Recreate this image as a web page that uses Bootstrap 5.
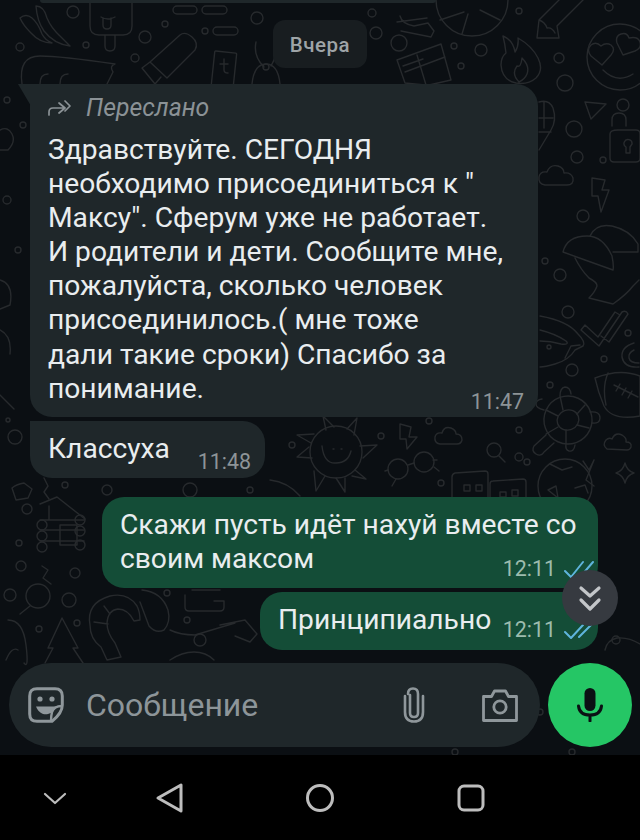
<!DOCTYPE html>
<html lang="ru">
  <head>
    <meta charset="UTF-8" />
    <title>Чат</title>
    <link href="https://cdn.jsdelivr.net/npm/bootstrap@5.3.3/dist/css/bootstrap.min.css" rel="stylesheet" />
    <style>
      html, body { height: 840px; overflow: hidden; }
      body { font-family: Roboto, "Liberation Sans", sans-serif; background: #000; color: #e9edef; }
      .chat-screen { height: 755px; background: #0b0f13; position: relative; overflow: hidden; }
      .doodles { position: absolute; left: 0; top: 0; width: 640px; height: 755px; fill: none; stroke: #272a2d; stroke-width: 1.4; stroke-linecap: round; stroke-linejoin: round; }
      .chat-flow { position: relative; height: 100%; }
      .top-sliver { height: 3px; width: 396px; margin-left: 40px; background: #1f272a; border-radius: 0 0 6px 6px; }
      .date-chip { width: 94px; height: 48px; margin: 17px auto 16px; padding-top: 3px; background: #181d20; border-radius: 12px; color: #9ea4a7; font-size: 20.5px; font-weight: 500; letter-spacing: .5px; }
      .bubble { background: #1f272a; font-size: 28.2px; line-height: 34.1px; position: relative; }
      .bubble-in { margin-left: 30px; border-radius: 0 22px 22px 22px; }
      .bubble-in.tailed::before { content: ""; position: absolute; left: -12px; top: 0; width: 13px; height: 22px; background: #1f272a; clip-path: polygon(0 0, 100% 0, 100% 100%); }
      .bubble-out { background: #144d37; margin-left: auto; margin-right: 42px; border-radius: 22px; }
      .bubble-long { width: 508px; height: 333px; padding: 12px 14px 0 18px; margin-bottom: 4px; }
      .bubble-short { width: 235px; height: 57px; padding: 11px 14px 0 18px; margin-bottom: 19px; }
      .bubble-sent { width: 496px; height: 91px; padding: 11px 3px 0 18px; margin-bottom: 4px; }
      .bubble-tiny { width: 338px; height: 58px; padding: 11px 3px 0 18px; }
      .forward-line { color: #8b9296; font-size: 24.8px; font-style: italic; line-height: 24px; margin-bottom: 13px; gap: 15px; }
      .msg-time { color: #8d9497; font-size: 21.4px; line-height: 24px; white-space: nowrap; }
      .bubble-out .msg-time { color: #9dbcae; }
      .time-end { margin-top: -16px; }
      .time-sent { gap: 8px; }
      .time-up { margin-top: -19px; }
      .scroll-down { position: absolute; left: 562px; top: 570px; width: 56px; height: 56px; border-radius: 50%; background: #363a40; }
      .composer-row { position: absolute; left: 9px; top: 663px; width: 623px; gap: 8px; }
      .composer { width: 531px; height: 84px; background: #1f272a; border-radius: 42px; padding: 0 22px 0 19px; color: #8d9599; font-size: 32px; }
      .composer-label { margin-left: 22px; }
      .clip-icon { margin-right: 56px; }
      .mic-btn { width: 84px; height: 84px; background: #25c665; border-radius: 50%; }
      .sys-nav { height: 85px; background: #000; padding-left: 41px; }
      .nav-back { margin-left: 86px; }
      .nav-home { margin-left: 120px; }
      .nav-recent { margin-left: 122px; }
    </style>
  </head>
  <body>
    <div class="chat-screen">
      <svg class="doodles" viewBox="0 0 640 755" aria-hidden="true">
        <!-- мелкие кружки -->
        <circle cx="73" cy="12" r="6"/><circle cx="165" cy="24" r="3"/><circle cx="145" cy="37" r="6"/><circle cx="20" cy="47" r="4"/>
        <circle cx="86" cy="45" r="3"/><circle cx="135" cy="58" r="4"/><circle cx="257" cy="18" r="6"/><circle cx="205" cy="31" r="3"/>
        <circle cx="372" cy="13" r="4"/><circle cx="376" cy="33" r="6"/><circle cx="399" cy="43" r="8"/><circle cx="454" cy="46" r="3"/>
        <circle cx="481" cy="50" r="6"/><circle cx="461" cy="66" r="3"/><circle cx="519" cy="11" r="3"/><circle cx="609" cy="7" r="4"/>
        <circle cx="559" cy="58" r="5"/><circle cx="565" cy="83" r="8"/><circle cx="623" cy="105" r="6"/><circle cx="574" cy="129" r="8"/>
        <circle cx="577" cy="157" r="6"/><circle cx="603" cy="160" r="3"/><circle cx="583" cy="216" r="6"/><circle cx="545" cy="261" r="3"/>
        <circle cx="560" cy="275" r="6"/><circle cx="568" cy="312" r="6"/><circle cx="628" cy="333" r="3"/><circle cx="604" cy="359" r="3"/>
        <circle cx="572" cy="370" r="6"/><circle cx="550" cy="385" r="3"/><circle cx="519" cy="430" r="3"/><circle cx="527" cy="462" r="3"/>
        <circle cx="292" cy="445" r="3"/><circle cx="381" cy="436" r="3"/><circle cx="519" cy="457" r="4"/><circle cx="441" cy="483" r="3"/>
        <circle cx="429" cy="421" r="3"/><circle cx="27" cy="509" r="5"/><circle cx="107" cy="490" r="5"/><circle cx="65" cy="485" r="3"/>
        <circle cx="19" cy="543" r="3"/><circle cx="21" cy="566" r="5"/><circle cx="75" cy="573" r="5"/><circle cx="10" cy="595" r="6"/>
        <circle cx="69" cy="600" r="7"/><circle cx="39" cy="629" r="3"/><circle cx="77" cy="623" r="3"/><circle cx="7" cy="100" r="3"/>
        <circle cx="23" cy="125" r="3"/><circle cx="15" cy="437" r="7"/><circle cx="167" cy="593" r="3"/>
        <circle cx="200" cy="640" r="6"/><circle cx="187" cy="620" r="3"/><circle cx="616" cy="640" r="4"/><circle cx="250" cy="490" r="3"/>
        <circle cx="190" cy="490" r="7"/><circle cx="455" cy="752" r="3"/><circle cx="572" cy="752" r="3"/><circle cx="540" cy="712" r="3"/>
        <!-- эскимо -->
        <path d="M90 -8v34q0 9 9 9h24q9 0 9-9v-34M105 35v11q0 5 5 5t5-5v-11"/>
        <path d="M101 17q7 4 14 0M103 18v7q0 4 4 4t4-4v-7"/>
        <!-- перец -->
        <path d="M20 18q6-5 12 0 6 5 10 16 3 6 10 9-12 0-21-10-8-8-11-15zM36 6q8 0 11 12 4 10 14 19 6 6 9 9-16-2-26-15-7-10-8-25z"/>
        <!-- пилюли -->
        <rect x="173" y="6" width="24" height="8" rx="4"/><rect x="202" y="6" width="25" height="8" rx="4"/><rect x="213" y="27" width="25" height="8" rx="4"/>
        <path d="M150 62l30-27q5-4 12 2 7 6 3 13l-28 28zM150 62l-8 6 13 16 6-7"/>
        <rect x="213" y="52" width="22" height="34" rx="1" transform="rotate(6 224 69)"/>
        <path d="M220 64h8M224 59v11q0 3 4 3"/>
        <!-- кролик -->
        <path d="M256 42q-3 14 8 25M276 42q2 12-5 24M252 84q2-20 14-20t14 20"/><circle cx="266" cy="67" r="3"/>
        <!-- шляпа слева -->
        <path d="M22 84q-4-28 18-28 20 0 75 8-6 2-2 8l-6 12M40 84q0-10 8-10M60 84q0-10 8-10"/>
        <!-- колесо -->
        <path d="M436 0a36 36 0 0 0 72 0M462 34l6-20M500 20l-20-10M440 20l24-8"/>
        <path d="M397 22l30 -4M400 16q2 8 14 10l14-3 6 8-3 6-30-6"/>
        <!-- шоколадка -->
        <path d="M397 60l44-16 10 36-22 5-4 0-20 -2zM405 72l40-15M417 55l9 30M403 66l20-7"/>
        <!-- карандаш -->
        <path d="M537 38l2-18 36-36 18 6-36 36 2 12zM539 20q6 2 8 8 5-1 8 5"/>
        <!-- огонь -->
        <path d="M503 36q10 4 12 16 4-6 3-14 14 8 20 20 6 12-2 20-8 7-20 5-14-3-15-18 0-8 5-12-1-9-3-17zM519 82q-8-8-2-16 4 2 5-8 8 8 5 16-2 5-8 8"/>
        <!-- лицо -->
        <circle cx="620" cy="57" r="33"/>
        <path d="M601 46q-5-5-10-1-5 5 0 11l11 9 9-10q5-6 0-10-5-3-10 1zM629 38q-2-6-8-4-6 2-4 9l6 12 12-4q7-3 5-9-2-6-11-4zM603 70q14 14 30 4"/>
        <!-- самолётик, замок, кукуруза, облака -->
        <path d="M585 102l21 2-15 15z"/>
        <path d="M612 126v-6q0-7 7-7t7 7v6M618 130h18q4 0 4 4v24q0 4-4 4h-22q-4 0-4-4v-24q0-4 8-4zM632 144a4 4 0 1 0-6 3v6h4v-6z"/>
        <path d="M539 102q10-3 14 6 4 12-2 22l-12 20M539 118h14M539 132h12M544 102v26"/>
        <path d="M545 185q-7-1-6-8 1-6 8-5 3-8 11-6 6 2 6 7 7-1 9 5 1 7-6 7z"/>
        <path d="M592 178l13 2-3 10 7 0-8 22-3-16-6 0z"/>
        <!-- шапка -->
        <path d="M563 252q4-16 24-16 16 0 25 20 2 10 1 14l-28-10-22-8zM590 236q6-13 22-10 18 4 26 18v8h-25M575 258q6 12 14 20 8 4 8 8 -2 6-8 12l24 6q14-10 20-18l6-6"/>
        <!-- галочки -->
        <path d="M585 325l13 12 17-25 5 3-21 31-18-16zM605 337l17-25q4-2 6 2l-19 28-8-6"/>
        <!-- кит -->
        <path d="M540 316q28 5 38 18 8 8 5 12l-8 4q-6 10-20 14-10 3-15 3M540 330q16 4 26 11 4 4-5 3-10-3-21-3M565 358l6-12 9-1"/><circle cx="549" cy="347" r="2"/>
        <!-- луна, мяч -->
        <path d="M634 343q-13 4-12 14 2 11 17 10M634 350q-6 3-5 8 1 5 10 5"/>
        <path d="M595 378q25-10 45-2v40q-28 5-36-10-6-14-9-28zM608 373q-6 14-2 32M614 385l24 12M620 384l-4 7M626 388l-4 7M632 391l-4 7"/>
        <!-- черепаха -->
        <ellipse cx="568" cy="420" rx="24" ry="24" transform="rotate(-20 568 420)"/>
        <ellipse cx="568" cy="420" rx="11" ry="10" transform="rotate(-20 568 420)"/>
        <path d="M560 396l3 14M585 405l-8 9M589 428l-12-3M566 444v-14M546 434l12-7M546 410l12 6M546 435l-12 11q-3 5 2 8t8-2l10-9M566 444q-1 6 3 7 5 1 6-6M590 412q10-1 10 6 0 6-8 5M560 396q0-8 5-9 5 0 6 7M544 410q-8-2-8-6t6-5"/>
        <path d="M607 449q-5-4-1-9 3-3 6-1 3-7 10-4 5 3 4 7 6 0 5 5-1 3-4 3z"/>
        <!-- мяч и звезда -->
        <circle cx="565" cy="486" r="27"/><path d="M550 464l12 6 10-3M548 490l10 8-2-12zM575 488l10-3 3 8"/>
        <path d="M583 461l6 9 5-10-8 20 8 6"/>
        <path d="M625 463q2 8 9 10-7 2-9 10-2-8-9-10 7-2 9-10z"/>
        <!-- солнце -->
        <circle cx="336" cy="452" r="26"/>
        <path d="M322 446q2 18 14 17 12 0 15-12M333 449h1M341 449h1M326 430l-3-14 11 11M347 429l10-11-3 17M360 446l17-1-14 13M355 470l11 9-14-3M345 478l0 14-9-14M325 476l-9 15-2-20M312 458l-15 -1 12-10M311 443l-14-8 17-1"/>
        <path d="M270 480q18 2 30 16"/>
        <!-- молния, облако, очки, лупа -->
        <path d="M400 424l11 3-2 10 8 0-10 12 -1-10-6 0z"/>
        <path d="M440 444q-6-1-5-7 1-5 7-4 2-7 9-5 5 2 5 6 6 0 6 6-1 4-5 4z"/>
        <circle cx="398" cy="469" r="10"/><circle cx="424" cy="462" r="10"/><path d="M408 465l6-2M388 470l-3 1M433 460l4 0M396 479l-4 7M434 467l5 4"/>
        <circle cx="494" cy="450" r="7"/><path d="M499 456l6 6"/>
        <!-- дома -->
        <path d="M452 497v-20q0-3 3-4l30-2q3 0 3 3v23M490 497v-13q0-3 3-3l30-2q3 0 3 3v15"/>
        <path d="M464 485h6v6h-6zM476 485h6v6h-6zM500 492h6v5h-6zM512 490h6v6h-6z"/>
        <!-- избушка -->
        <path d="M40 504l17-7 28 22M49 520v-14M40 520h44M40 530h44M40 541h44M60 525h17v20h-17z"/>
        <circle cx="42" cy="525" r="5"/><circle cx="42" cy="536" r="5"/><circle cx="42" cy="547" r="5"/>
        <circle cx="80" cy="520" r="5"/><circle cx="80" cy="531" r="5"/><circle cx="80" cy="545" r="5"/>
        <path d="M44 478l4 8-4 6 5 7"/><path d="M12 488q5-4 12-5l8 6-4 9-12 2z"/>
        <!-- ключ и ёлка -->
        <path d="M42 566l6 4-5 8 8 6"/>
        <circle cx="38" cy="596" r="12"/><path d="M30 606l-10 8"/>
        <path d="M62 618l-14 30h5l-8 15M62 618l16 30h-5l10 15"/>
        <path d="M8 620q15 0 18 25t-2 18"/>
        <!-- креветка -->
        <path d="M90 625q-4-22 20-29 18-4 27 10 3 6 3 14l-6 1q-6-12-16-12-10 1-11 14 0 10 8 20l6 14-14 3-6-13q-11-8-11-22zM94 622l14 2M104 606l6 8"/>
        <path d="M142 590q20 2 26 20 3 12-4 20-8 4-15-4l-9-24"/>
        <path d="M185 595v12q0 4 4 4h31q4 0 4-4v-6h-10M192 590h28"/>
        <path d="M170 630q10 5 25 5l40-12M220 625l25-5 12 14-7 8-15-6"/>
        <!-- низ -->
        <path d="M170 660q12-8 24-8t20 8"/>
        <path d="M605 650q2-10 12-12 12-1 23 6"/>
        <path d="M6 660q6-14 12-10"/>
        <path d="M0 130q8-4 12 4t-4 16H0"/><path d="M0 280q14 4 10 25l-10 4M0 330q12 6 10 24"/>
        <path d="M0 395l14 14"/>
        <circle cx="7" cy="200" r="4"/><circle cx="18" cy="250" r="3"/><circle cx="8" cy="420" r="2"/>
      </svg>

      <div class="chat-flow">
        <div class="top-sliver"></div>
        <div class="date-chip d-flex align-items-center justify-content-center">Вчера</div>

        <div class="bubble bubble-in tailed bubble-long">
          <div class="forward-line d-flex align-items-center">
            <svg width="23" height="16" viewBox="0 0 23 16" fill="none" stroke="#8b9296" stroke-width="1.7" stroke-linecap="round" stroke-linejoin="round"><path d="M1 15v-3q0-4 4-4h10M11 3l6 5-6 5M17 1l5 5-5 5"/></svg>
            <span>Переслано</span>
          </div>
          <div>Здравствуйте. СЕГОДНЯ<br />необходимо присоединиться к "<br />Максу". Сферум уже не работает.<br />И родители и дети. Сообщите мне,<br />пожалуйста, сколько человек<br />присоединилось.( мне тоже<br />дали такие сроки) Спасибо за<br />понимание.</div>
          <div class="msg-time time-end text-end">11:47</div>
        </div>

        <div class="bubble bubble-in bubble-short d-flex justify-content-between">
          <span>Классуха</span>
          <span class="msg-time align-self-end mb-1">11:48</span>
        </div>

        <div class="bubble bubble-out bubble-sent">
          <div>Скажи пусть идёт нахуй вместе со<br />своим максом</div>
          <div class="msg-time time-sent time-up d-flex justify-content-end align-items-center">
            <span>12:11</span>
            <svg width="31" height="19" viewBox="0 0 31 19" fill="none" stroke="#5fb4dc" stroke-width="2" stroke-linecap="round" stroke-linejoin="round"><path d="M1 11l6 6L19 2M17 16L29 2"/></svg>
          </div>
        </div>

        <div class="bubble bubble-out bubble-tiny d-flex justify-content-between">
          <span>Принципиально</span>
          <div class="msg-time time-sent d-flex align-items-center align-self-end mb-2">
            <span>12:11</span>
            <svg width="31" height="19" viewBox="0 0 31 19" fill="none" stroke="#5fb4dc" stroke-width="2" stroke-linecap="round" stroke-linejoin="round"><path d="M1 11l6 6L19 4M15 16L27 4"/></svg>
          </div>
        </div>

        <div class="scroll-down d-flex align-items-center justify-content-center">
          <svg width="24" height="27" viewBox="0 0 24 27" fill="none" stroke="#c3c6c9" stroke-width="3.2" stroke-linecap="round" stroke-linejoin="round"><path d="M3 3l9 8 9-8M3 15l9 9 9-9"/></svg>
        </div>

        <div class="composer-row d-flex align-items-center">
          <div class="composer d-flex align-items-center">
            <svg width="36" height="36" viewBox="0 0 36 36" fill="none" stroke="#8f979b" stroke-width="3" stroke-linejoin="round"><path d="M9 1.700h18q7.300 0 7.300 7.300v9Q34.300 26 24 34.300H9Q1.700 34.300 1.700 27V9Q1.700 1.700 9 1.700z"/><path d="M8 19.500h20q-2 6-8 7.500-2 .5-5 0-5-2-7-7.500z" fill="#8f979b" stroke="none"/><path d="M34 19q-8 0-10 6-1 4-1 9" stroke-width="2.400"/><circle cx="12" cy="12" r="2.600" fill="#8f979b" stroke="none"/><circle cx="24" cy="12" r="2.600" fill="#8f979b" stroke="none"/></svg>
            <span class="composer-label flex-grow-1">Сообщение</span>
            <svg class="clip-icon" width="24" height="36" viewBox="0 0 24 36" fill="none" stroke="#8f979b" stroke-width="2.600" stroke-linecap="round"><path d="M8 8v18q0 4 4 4t4-4V7q0-5.500-5-5.500T6 7"/><path d="M3 9v16q0 9.500 9 9.500t9-9.500V9"/></svg>
            <svg width="36" height="33" viewBox="0 0 36 33" fill="none" stroke="#8f979b" stroke-width="2.800" stroke-linejoin="round"><path d="M1.500 7.500h8l3-5.500h11l3 5.500h8v24h-33z"/><circle cx="18" cy="18" r="6.200"/></svg>
          </div>
          <div class="mic-btn d-flex align-items-center justify-content-center flex-shrink-0">
            <svg width="26" height="34" viewBox="0 0 26 34" fill="none" stroke="#0b1014" stroke-width="3" stroke-linecap="round"><rect x="7.500" y="0" width="11" height="23" rx="5.500" fill="#0b1014" stroke="none"/><path d="M1.500 18q1 9 11.500 9t11.500-9M13 27v6"/></svg>
          </div>
        </div>
      </div>
    </div>

    <div class="sys-nav d-flex align-items-center">
      <svg width="28" height="28" viewBox="0 0 28 28" fill="none" stroke="#bdbdbd" stroke-width="2.200" stroke-linecap="round" stroke-linejoin="round"><path d="M4 10l10 9 10-9"/></svg>
      <svg class="nav-back" width="30" height="32" viewBox="0 0 30 32" fill="none" stroke="#bdbdbd" stroke-width="3" stroke-linejoin="round"><path d="M26 3v26L3 16z"/></svg>
      <svg class="nav-home" width="30" height="30" viewBox="0 0 30 30" fill="none" stroke="#bdbdbd" stroke-width="3"><circle cx="15" cy="15" r="12.500"/></svg>
      <svg class="nav-recent" width="28" height="28" viewBox="0 0 28 28" fill="none" stroke="#bdbdbd" stroke-width="3"><rect x="2" y="2" width="24" height="24" rx="5"/></svg>
    </div>
  </body>
</html>
